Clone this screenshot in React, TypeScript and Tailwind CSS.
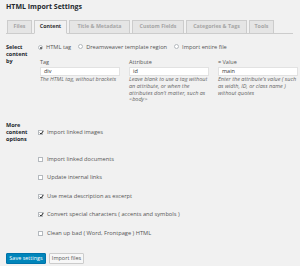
import React from "react";

const tabs = [
  { name: "Files", w: "w-[25px]" },
  { name: "Content", w: "w-[33px]", active: true },
  { name: "Title & Metadata", w: "w-[61px]" },
  { name: "Custom Fields", w: "w-[52px]" },
  { name: "Categories & Tags", w: "w-[61px]" },
  { name: "Tools", w: "w-[25px]" },
];

function Radio({ checked }: { checked?: boolean }) {
  return (
    <span className="inline-flex h-[5px] w-[5px] shrink-0 items-center justify-center rounded-full border border-[#b4b9be] bg-white">
      {checked && <span className="h-[2px] w-[2px] rounded-full bg-[#444]" />}
    </span>
  );
}

function Check({ checked }: { checked?: boolean }) {
  return (
    <span className="relative inline-flex h-[5px] w-[5px] shrink-0 items-center justify-center border border-[#b4b9be] bg-white">
      {checked && (
        <svg viewBox="0 0 10 10" className="absolute left-[0px] top-[-1px] h-[5px] w-[5px]">
          <path d="M1.5 5.5 L4 8 L9 1.5" stroke="#333" strokeWidth="2" fill="none" />
        </svg>
      )}
    </span>
  );
}

function Field({ label, value, help }: { label: string; value: string; help: React.ReactNode }) {
  return (
    <div className="flex w-[80px] flex-col">
      <div className="text-[5.5px] leading-[7px] text-[#555]">{label}</div>
      <div className="mt-[0.5px] flex h-[9px] items-center border border-[#e2e2e2] bg-white pl-[3px] text-[5.5px] text-[#333]">
        {value}
      </div>
      <div className="mt-[0.5px] text-[5.5px] italic leading-[6.8px] text-[#666]">{help}</div>
    </div>
  );
}

const options: { label: string; checked: boolean; mt: string }[] = [
  { label: "Import linked images", checked: true, mt: "mt-[0px]" },
  { label: "Import linked documents", checked: false, mt: "mt-[20px]" },
  { label: "Update internal links", checked: false, mt: "mt-[11px]" },
  { label: "Use meta description as excerpt", checked: true, mt: "mt-[12px]" },
  { label: "Convert special characters ( accents and symbols )", checked: true, mt: "mt-[11px]" },
  { label: "Clean up bad ( Word, Frontpage ) HTML", checked: false, mt: "mt-[12px]" },
];

export default function App() {
  return (
    <div
      className="h-[266px] w-[300px] overflow-hidden bg-[#f1f1f1] text-[#444]"
      style={{ fontFamily: '"Open Sans", "Liberation Sans", sans-serif' }}
    >
      <div className="pl-[6px] pt-[3px] text-[7px] font-bold leading-[8px] text-[#23282d]">
        HTML Import Settings
      </div>

      <div className="ml-[6px] mr-[7px] mt-[9px] flex h-[14px] items-end gap-[2px] border-b border-[#ccc] pl-[1px]">
        {tabs.map((t) => (
          <div
            key={t.name}
            className={
              t.active
                ? `${t.w} -mb-px flex h-[14px] items-center justify-center border border-[#ccc] border-b-[#f1f1f1] bg-[#f1f1f1] text-[5.3px] font-bold text-[#333]`
                : `${t.w} -mb-px flex h-[14px] items-center justify-center border border-[#ccc] bg-[#e5e5e5] text-[5.3px] font-bold text-[#a5a5a5]`
            }
          >
            {t.name}
          </div>
        ))}
      </div>

      <div className="mt-[10px] flex h-[78px] pl-[6px]">
        <div className="w-[32px] text-[5.5px] font-bold leading-[7px] text-[#23282d]">
          Select
          <br />
          content
          <br />
          by
        </div>
        <div className="flex flex-col">
          <div className="flex h-[7px] items-center whitespace-nowrap text-[5.7px] text-[#555]">
            <Radio checked />
            <span className="ml-[3px]">HTML tag</span>
            <span className="ml-[7px]">
              <Radio />
            </span>
            <span className="ml-[3px]">Dreamweaver template region</span>
            <span className="ml-[7px]">
              <Radio />
            </span>
            <span className="ml-[3px]">Import entire file</span>
          </div>
          <div className="ml-[2px] mt-[8px] flex gap-[9px]">
            <Field label="Tag" value="div" help="The HTML tag, without brackets" />
            <Field
              label="Attribute"
              value="id"
              help={
                <>
                  Leave blank to use a tag without an attribute, or when the attributes don't matter, such as &lt;body&gt;
                </>
              }
            />
            <Field
              label="= Value"
              value="main"
              help="Enter the attribute's value ( such as width, ID, or class name ) without quotes"
            />
          </div>
        </div>
      </div>

      <div className="flex pl-[6px]">
        <div className="w-[32px] text-[5.5px] font-bold leading-[7px] text-[#23282d]">
          More
          <br />
          content
          <br />
          options
        </div>
        <div className="flex flex-col pt-[7px]">
          {options.map((o) => (
            <div key={o.label} className={`${o.mt} flex h-[7px] items-center whitespace-nowrap text-[5.7px] text-[#555]`}>
              <Check checked={o.checked} />
              <span className="ml-[4px]">{o.label}</span>
            </div>
          ))}
        </div>
      </div>

      <div className="ml-[6px] mt-[16px] flex gap-[3px]">
        <div className="flex h-[11px] w-[40px] items-center justify-center rounded-[1px] border border-[#0073aa] bg-[#0085ba] text-[5.5px] text-white">
          Save settings
        </div>
        <div className="flex h-[11px] w-[35px] items-center justify-center rounded-[1px] border border-[#ccc] bg-[#f7f7f7] text-[5.5px] text-[#555]">
          Import files
        </div>
      </div>
    </div>
  );
}
